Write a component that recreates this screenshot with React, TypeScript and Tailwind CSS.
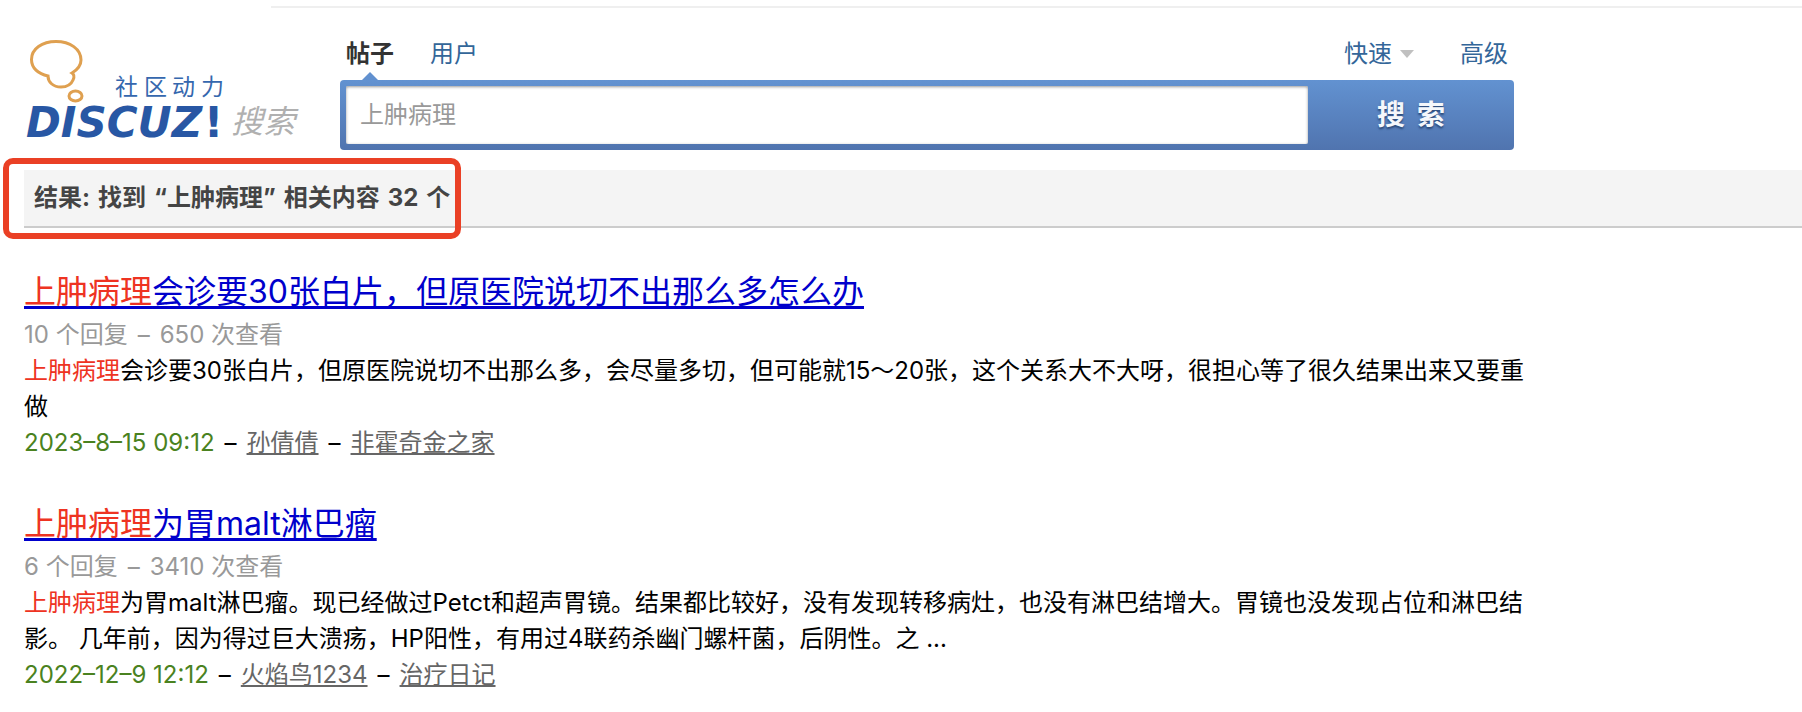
/**
 * Forum search page - search form and list of matching threads.
 */

import { useState } from 'react';

interface Thread {
  id: number;
  keyword: string;
  title: string;
  replies: number;
  views: number;
  excerpt: string;
  date: string;
  author: string;
  forum: string;
}

const KEYWORD = '上肿病理';

const threads: Thread[] = [
  {
    id: 1,
    keyword: KEYWORD,
    title: '会诊要30张白片，但原医院说切不出那么多怎么办',
    replies: 10,
    views: 650,
    excerpt:
      '会诊要30张白片，但原医院说切不出那么多，会尽量多切，但可能就15～20张，这个关系大不大呀，很担心等了很久结果出来又要重做',
    date: '2023–8–15 09:12',
    author: '孙倩倩',
    forum: '非霍奇金之家',
  },
  {
    id: 2,
    keyword: KEYWORD,
    title: '为胃malt淋巴瘤',
    replies: 6,
    views: 3410,
    excerpt:
      '为胃malt淋巴瘤。现已经做过Petct和超声胃镜。结果都比较好，没有发现转移病灶，也没有淋巴结增大。胃镜也没发现占位和淋巴结影。 几年前，因为得过巨大溃疡，HP阳性，有用过4联药杀幽门螺杆菌，后阴性。之 ...',
    date: '2022–12–9 12:12',
    author: '火焰鸟1234',
    forum: '治疗日记',
  },
];

export default function App() {
  const [query, setQuery] = useState(KEYWORD);

  return (
    <div className="bg-white pt-1.5 text-2xl leading-9 text-black font-['Inter','Noto_Sans_CJK_SC',sans-serif]">
      <div className="ml-[271px] h-0.5 bg-[#efefef]" />

      {/* Header */}
      <header className="flex gap-10 pl-5 pt-7">
        <a href="#home" className="shrink-0">
          <Logo />
        </a>

        <form
          className="w-full max-w-[1174px]"
          onSubmit={(e) => e.preventDefault()}
        >
          <div className="flex justify-between px-1.5 pb-2 text-[#369]">
            <nav className="flex gap-9">
              <a href="#threads" className="relative font-bold text-[#333]">
                帖子
                <svg
                  viewBox="0 0 16 8"
                  className="absolute left-1/2 top-full h-2 w-4 -translate-x-1/2 fill-[#6190cf]"
                >
                  <path d="M0 8 8 0l8 8z" />
                </svg>
              </a>
              <a href="#users">用户</a>
            </nav>
            <div className="flex gap-[46px]">
              <button type="button" className="flex items-center gap-2">
                快速
                <svg viewBox="0 0 14 8" className="h-2 w-3.5 fill-[#c0c0c0]">
                  <path d="M0 0h14L7 8z" />
                </svg>
              </button>
              <a href="#advanced">高级</a>
            </div>
          </div>

          <div className="flex h-[70px] rounded-sm bg-linear-to-b from-[#6292d1] to-[#5074af] p-1.5 pr-0">
            <input
              type="text"
              aria-label="搜索"
              value={query}
              onChange={(e) => setQuery(e.target.value)}
              className="min-w-0 flex-1 rounded-xs bg-white px-3.5 text-[#999] shadow-[inset_0_1px_3px_#999] outline-none"
            />
            <button
              type="submit"
              className="flex w-[206px] items-center justify-center gap-3 text-[28px] font-bold text-[#f4f7fb] text-shadow-[0_2px_2px_#2b4a7a]"
            >
              <span>搜</span>
              <span>索</span>
            </button>
          </div>
        </form>
      </header>

      {/* Result count */}
      <div className="relative ml-6 mt-5 border-b-2 border-[#ccc] bg-[#f4f4f4] px-2.5 py-2.5">
        <h1 className="flex gap-2 font-bold text-[#444]">
          <span>结果:</span>
          <span>找到</span>
          <span>“{KEYWORD}”</span>
          <span>相关内容</span>
          <span>32</span>
          <span>个</span>
        </h1>
        <div className="pointer-events-none absolute -left-[21px] -top-3 h-[81px] w-[458px] rounded-[10px] border-6 border-[#ea4025]" />
      </div>

      {/* Threads */}
      <ul className="mx-6 mt-[39px] max-w-[1510px] space-y-[38px]">
        {threads.map((thread) => (
          <ThreadItem key={thread.id} thread={thread} />
        ))}
      </ul>
    </div>
  );
}

function ThreadItem({ thread }: { thread: Thread }) {
  return (
    <li>
      <h2 className="text-[32px] leading-[50px]">
        <a
          href={`#thread-${thread.id}`}
          className="text-[#0000cc] underline decoration-3 underline-offset-3"
        >
          <em className="not-italic text-[#ee3322]">{thread.keyword}</em>
          {thread.title}
        </a>
      </h2>
      <p className="flex gap-2.5 text-[#999]">
        <span>{thread.replies} 个回复</span>
        <span>–</span>
        <span>{thread.views} 次查看</span>
      </p>
      <p>
        <em className="not-italic text-[#ee3322]">{thread.keyword}</em>
        {thread.excerpt}
      </p>
      <p className="flex gap-2.5">
        <span className="text-[#4a8220]">{thread.date}</span>
        <span>–</span>
        <a href="#author" className="text-[#666] underline decoration-2 underline-offset-2">
          {thread.author}
        </a>
        <span>–</span>
        <a href="#forum" className="text-[#666] underline decoration-2 underline-offset-2">
          {thread.forum}
        </a>
      </p>
    </li>
  );
}

function Logo() {
  return (
    <svg viewBox="0 0 280 110" className="h-[110px] w-[280px]">
      {/* speech bubble */}
      <g fill="none" stroke="#dfa050" strokeWidth="3">
        <path d="M28 40C18 38 11.500 32 11.500 23.500C11.500 13 22 5.500 36 5.500S61 13 61 24C61 30 57 34 52 37C55 39 54 42 53 44C51 49 46 51 41 51C33 51 28 46 28 40Z" />
        <ellipse cx="55.500" cy="60" rx="6.500" ry="5" />
      </g>
      <text
        x="95 124 152 181"
        y="59"
        fontSize="23"
        fill="#3567ae"
        className="font-['Noto_Sans_CJK_SC',sans-serif]"
      >
        社区动力
      </text>
      <g
        fontSize="42"
        fill="#2857a4"
        className="font-['DejaVu_Sans',sans-serif] font-bold"
      >
        <text x="6" y="101" className="italic">
          DISCUZ
        </text>
        <text x="184" y="101">
          !
        </text>
      </g>
      <text
        x="211"
        y="97"
        fontSize="32"
        fill="#b0b0b0"
        className="font-['Noto_Sans_CJK_SC',sans-serif] italic"
      >
        搜索
      </text>
    </svg>
  );
}
